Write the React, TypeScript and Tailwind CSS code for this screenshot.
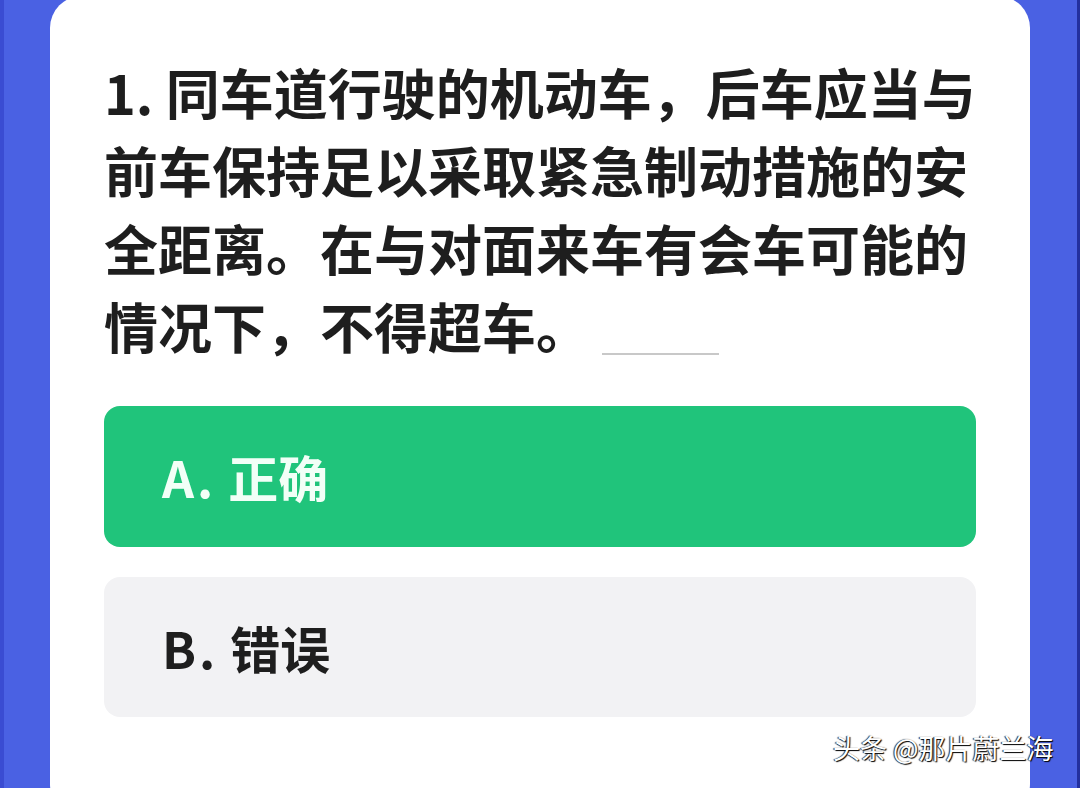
export default function App() {
  const font = { fontFamily: '"Noto Sans CJK SC", "Noto Sans", sans-serif' };
  return (
    <div
      className="relative w-[1080px] h-[788px] overflow-hidden bg-[#4a61e3] px-[50px]"
      style={font}
    >
      {/* edge shading */}
      <div className="absolute left-0 top-0 h-full w-[4px] bg-[#3a4cd2]" />
      <div className="absolute right-0 top-0 h-full w-[3px] bg-[#23309e]" />

      <div className="mt-[-4px] h-[820px] rounded-[32px] bg-white px-[54px] pt-[57px]">
        <p className="text-[54px] font-bold leading-[78px] text-[#1e1e1e] whitespace-nowrap">
          1. 同车道行驶的机动车，后车应当与
          <br />
          前车保持足以采取紧急制动措施的安
          <br />
          全距离。在与对面来车有会车可能的
          <br />
          情况下，不得超车。
          <span className="ml-[12px] inline-block w-[117px] border-b-2 border-[#c8c8c8] align-[-6px]" />
        </p>

        <div className="mt-[41px] flex flex-col gap-[30px]">
          <div className="flex h-[141px] items-center gap-[12px] rounded-[16px] bg-[#20c47b] pl-[58px] text-[50px] font-bold text-[#f2fff7]">
            <span className="tracking-[3px]">A.</span>
            <span>正确</span>
          </div>
          <div className="flex h-[140px] items-center gap-[12px] rounded-[16px] bg-[#f2f2f4] pl-[58px] text-[50px] font-bold text-[#1e1e1e]">
            <span className="tracking-[3px]">B.</span>
            <span>错误</span>
          </div>
        </div>
      </div>

      <div className="absolute left-[833px] top-[730px] text-[27px] leading-[36px] text-white [text-shadow:1px_1px_1px_#000,-1px_0_1px_#222]">
        头条 @那片蔚兰海
      </div>
    </div>
  );
}
